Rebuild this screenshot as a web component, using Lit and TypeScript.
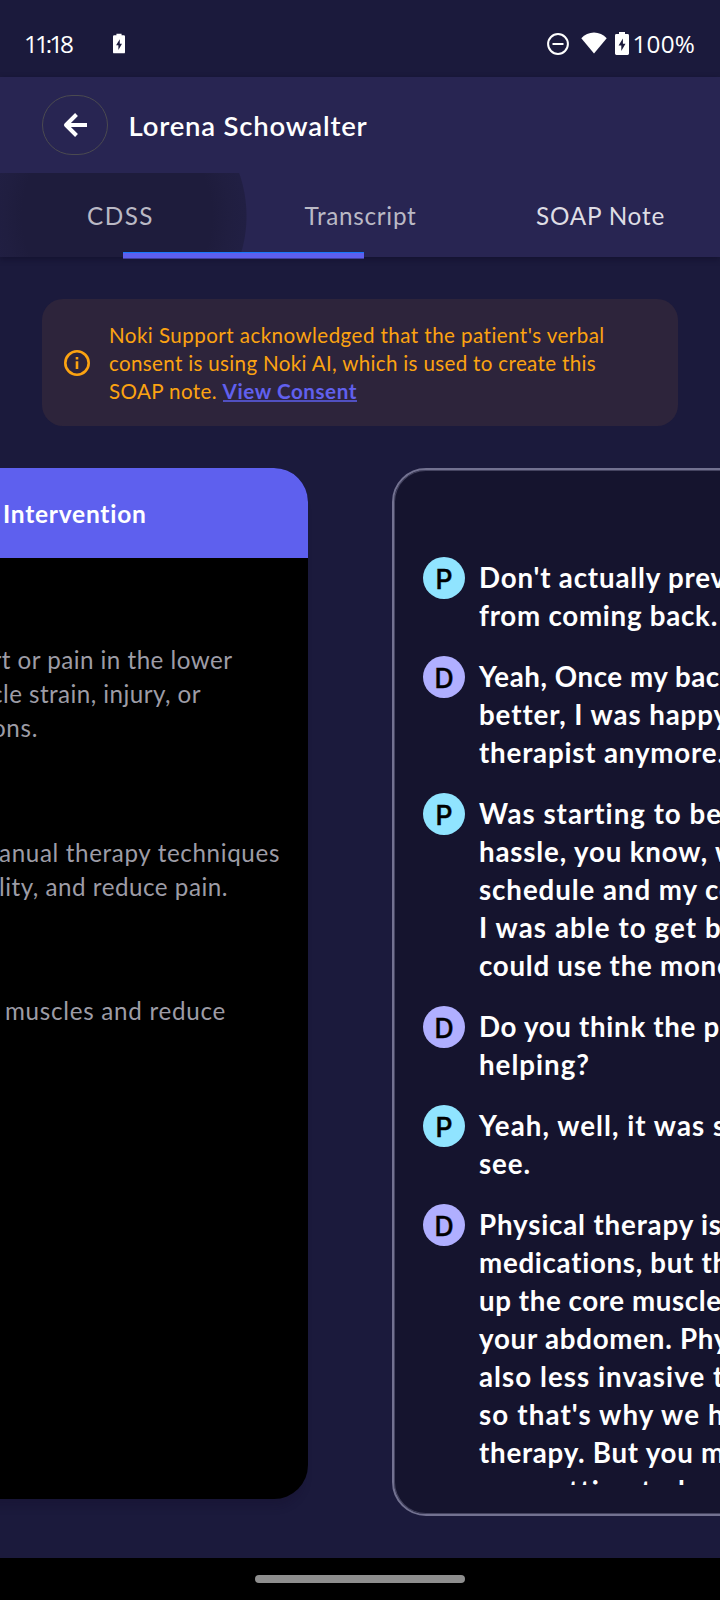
import { LitElement, html, css, svg } from "lit";
import { customElement, property } from "lit/decorators.js";

/* A single line whose letter spacing is adjusted so that `text` spans `width` pixels.
   `tail` continues the line with the same spacing. */
@customElement("fit-text")
class FitText extends LitElement {
  @property() text = "";
  @property() tail = "";
  @property({ type: Number }) width = 0;

  static styles = css`
    :host { display: inline-block; white-space: pre; }
  `;

  firstUpdated() {
    const probe = this.renderRoot.querySelector("span") as HTMLElement;
    const natural = probe.getBoundingClientRect().width;
    if (this.width && natural) {
      this.style.letterSpacing = `${(this.width - natural) / this.text.length}px`;
    }
  }

  render() {
    return html`<span>${this.text}</span>${this.tail}`;
  }
}

type Line = [string, number, string?];
const fit = ([text, width, tail = ""]: Line) =>
  html`<fit-text .text=${text} .width=${width} .tail=${tail}></fit-text>`;

const groups: Line[][] = [
  [["rt or pain in the lower", 240], ["cle strain, injury, or", 210], ["ons.", 46]],
  [["anual therapy techniques", 281], ["lity, and reduce pain.", 229]],
  [["muscles and reduce", 221]],
];
const groupEnds = [[75.5, 107, 270], [28, 80], [82]];

const messages: { who: "P" | "D"; lines: Line[] }[] = [
  { who: "P", lines: [["Don't actually ", 189, "prevent"], ["from coming back.", 239]] },
  { who: "D", lines: [["Yeah, Once my ", 196, "back"], ["better, I was ", 169, "happy"], ["therapist ", 125, "anymore."]] },
  {
    who: "P",
    lines: [
      ["Was starting to ", 211, "be a"],
      ["hassle, you know, ", 236, "with"],
      ["schedule and my ", 226, "co"],
      ["I was able to get ", 226, "by"],
      ["could use the ", 181, "money"],
    ],
  },
  { who: "D", lines: [["Do you think the ", 224.5, "physical"], ["helping?", 111]] },
  { who: "P", lines: [["Yeah, well, it was ", 234, "so"], ["see.", 52]] },
  {
    who: "D",
    lines: [
      ["Physical therapy ", 222, "is"],
      ["medications, but ", 223, "they"],
      ["up the core ", 153, "muscles"],
      ["your abdomen. ", 201, "Physical"],
      ["also less invasive ", 234, "than"],
      ["so that's why we ", 229, "have"],
      ["therapy. But you ", 222, "may"],
      ["you getting to ", 198, "be"],
    ],
  },
];

const battery = (cls: string) => svg`
  <svg class=${cls} viewBox="0 0 14 23">
    <path fill="#fff" fill-rule="evenodd" d="M4 0h6v2h2.6Q14 2 14 3.4V21.6Q14 23 12.6 23H1.4Q0 23 0 21.6V3.4Q0 2 1.4 2H4ZM7.9 6.5 3.6 13.6H6.3V19L10.5 11.8H7.9Z"/>
  </svg>`;

@customElement("app-root")
class AppRoot extends LitElement {
  static styles = css`
    :host {
      display: flex; flex-direction: column; width: 720px; height: 1600px; overflow: hidden;
      background: #1b1a3c; color: #fff; font-family: Lato, sans-serif;
    }
    * { box-sizing: border-box; }
    svg { display: block; flex: none; }
    .status {
      height: 77px; flex: none; display: flex; align-items: center; padding: 11px 25px 0 24px;
      font: 500 24.3px "Open Sans", sans-serif;
    }
    .status fit-text { margin-top: -2px; }
    .note-battery { width: 12px; height: 23px; margin-left: 42px; margin-top: -1px; }
    .spacer { flex: 1; }
    .dnd { width: 22px; height: 22px; margin-right: 12px; }
    .wifi { width: 26px; height: 22px; margin-right: 8px; margin-top: -2px; }
    .battery { width: 14px; height: 23px; margin-right: 4px; margin-top: -1px; }

    .bar { height: 180px; flex: none; background: #282552; box-shadow: 0 2px 6px rgba(10, 8, 30, .4); }
    .top { height: 96px; display: flex; align-items: center; padding-left: 42px; }
    .back {
      width: 66px; height: 60px; border: 1px solid #4b4a50; border-radius: 30px; margin-right: 20.5px;
      display: flex; align-items: center; justify-content: center;
    }
    .back svg { width: 24px; height: 24px; }
    .title { font-size: 27.5px; font-weight: 600; padding-top: 1px; }
    .tabs {
      height: 84px; display: grid; grid-template-columns: repeat(3, 240px); position: relative;
      background: radial-gradient(circle 130px at 117px 43px, #1e1c3c 0, #1e1c3c 95px, #201e40 112px, #211f43 129px, transparent 130px);
    }
    .tab { display: flex; align-items: center; justify-content: center; font-size: 24.3px; color: #bab9c5; padding: 1px 0 0 1px; }
    .tab.bright { color: #dedde4; }
    .indicator {
      position: absolute; left: 123px; top: 79px; width: 241px; height: 7px;
      background: #5d5fee; border-top: 1.5px solid #1679fb; border-bottom: 1px solid #403f9b;
    }

    .notice {
      margin: 42px 42px 0; height: 127px; flex: none; border-radius: 21px; background: #2d243b; color: #fca311;
      display: flex; align-items: center; padding: 1px 0 0 22px; font-size: 20.6px; line-height: 28px;
    }
    .notice svg { width: 26px; height: 26px; margin: -1px 19px 0 0; }
    .row { display: flex; }
    .link { color: #6160ee; font-weight: 700; border-bottom: 2px solid #5150c0; height: 25px; }

    .pager { display: flex; align-items: flex-start; gap: 84px; margin: 42px 0 0 -328px; flex: none; width: 1356px; }
    .plan {
      width: 636px; height: 1031px; border-radius: 34px; background: #000; overflow: hidden;
      box-shadow: 0 12px 8px -5px rgba(20, 10, 40, .25);
    }
    .head { height: 90px; background: #5e60ee; display: flex; align-items: center; font-size: 24.5px; font-weight: 700; padding: 1px 0 0 331px; }
    .body { padding-top: 85px; display: flex; flex-direction: column; gap: 90.5px; font-size: 24.2px; line-height: 34px; color: #9d9ca6; }
    .end { display: flex; justify-content: flex-end; height: 34px; }

    .chat {
      width: 636px; height: 1048px; border: 2px solid #737291; border-radius: 34px; background: #15142e;
      box-shadow: inset 0 0 0 1px #454460; padding: 87px 29px 29px;
    }
    .scroll { height: 928px; overflow: hidden; display: flex; flex-direction: column; gap: 23px; }
    .msg { display: flex; gap: 14px; flex: none; font-size: 27.7px; font-weight: 700; line-height: 38px; }
    .lines { display: flex; flex-direction: column; align-items: flex-start; padding-top: 2px; margin-bottom: -2px; }
    .lines fit-text { height: 38px; }
    .avatar {
      width: 42px; height: 42px; border-radius: 50%; flex: none; color: #000;
      display: flex; align-items: center; justify-content: center; padding-top: 2px;
      font: 500 26.5px Inter, sans-serif; -webkit-text-stroke: .5px #000;
    }
    .P { background: #90e4ff; }
    .D { background: #b0afff; }

    .nav { margin-top: auto; height: 42px; flex: none; background: #000; display: flex; justify-content: center; padding-top: 17px; }
    .handle { width: 210px; height: 8px; border-radius: 4px; background: #8e8e8e; }
  `;

  render() {
    return html`
      <div class="status">
        ${fit(["11:18", 47])}
        ${battery("note-battery")}
        <div class="spacer"></div>
        <svg class="dnd" viewBox="0 0 22 22" fill="none" stroke="#fff" stroke-width="2">
          <circle cx="11" cy="11" r="9.9" /><path d="M5.5 11h11" />
        </svg>
        <svg class="wifi" viewBox="0 0 26 22"><path fill="#fff" d="M13 21.5.3 6.3C3.6 2.600 8.100.500 13 .5s9.400 2.100 12.700 5.800Z" /></svg>
        ${battery("battery")}
        ${fit(["100%", 62.5])}
      </div>
      <div class="bar">
        <div class="top">
          <div class="back">
            <svg viewBox="0 0 24 24" fill="none" stroke="#fff" stroke-width="4" stroke-linejoin="round">
              <path d="M24 12H3M13.500 1.500 3 12l10.500 10.500" />
            </svg>
          </div>
          <div class="title">${fit(["Lorena Schowalter", 239])}</div>
        </div>
        <div class="tabs">
          <div class="tab">${fit(["CDSS", 67])}</div>
          <div class="tab">${fit(["Transcript", 112])}</div>
          <div class="tab bright">${fit(["SOAP Note", 129])}</div>
          <div class="indicator"></div>
        </div>
      </div>
      <div class="notice">
        <svg viewBox="0 0 26 26" fill="none" stroke="#fca311">
          <circle cx="13" cy="13" r="11.700" stroke-width="2.600" />
          <path d="M13 11.300V19M13 7v2.600" stroke-width="2.600" />
        </svg>
        <div>
          <div class="row">${fit(["Noki Support acknowledged that the patient's verbal", 496])}</div>
          <div class="row">${fit(["consent is using Noki AI, which is used to create this", 487])}</div>
          <div class="row">${fit(["SOAP note. ", 113.5])}<span class="link">${fit(["View Consent", 134.5])}</span></div>
        </div>
      </div>
      <div class="pager">
        <div class="plan">
          <div class="head">${fit(["Intervention", 144])}</div>
          <div class="body">
            ${groups.map((g, i) => html`<div>
              ${g.map((l, j) => html`<div class="end" style="padding-right:${groupEnds[i][j]}px">${fit(l)}</div>`)}
            </div>`)}
          </div>
        </div>
        <div class="chat">
          <div class="scroll">
            ${messages.map((m) => html`<div class="msg">
              <div class="avatar ${m.who}">${m.who}</div>
              <div class="lines">${m.lines.map(fit)}</div>
            </div>`)}
          </div>
        </div>
      </div>
      <div class="nav"><div class="handle"></div></div>
    `;
  }
}
